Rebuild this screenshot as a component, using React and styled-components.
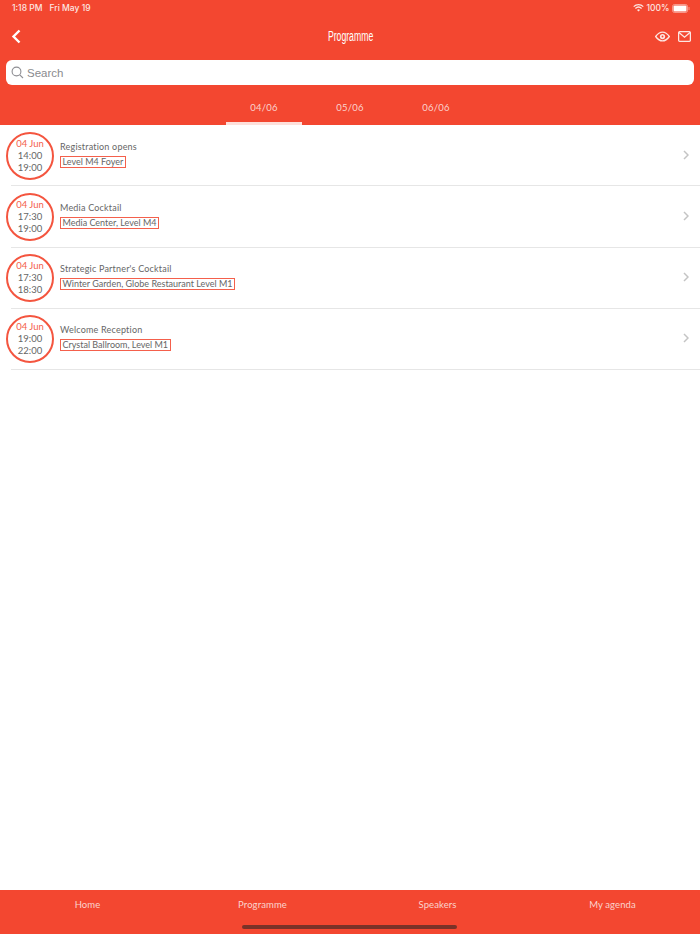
import React from "react";
import styled, { createGlobalStyle } from "styled-components";

const RED = "#f34730";
const BODY = `"Lato", "Liberation Sans", sans-serif`;

const events = [
  { from: "14:00", to: "19:00", title: "Registration opens", place: "Level M4 Foyer" },
  { from: "17:30", to: "19:00", title: "Media Cocktail", place: "Media Center, Level M4" },
  { from: "17:30", to: "18:30", title: "Strategic Partner's Cocktail", place: "Winter Garden, Globe Restaurant Level M1" },
  { from: "19:00", to: "22:00", title: "Welcome Reception", place: "Crystal Ballroom, Level M1" },
];

const GlobalStyle = createGlobalStyle`
  html, body { margin: 0; padding: 0; background: #fff; }
  body { font-family: ${BODY}; }
  * { box-sizing: border-box; }
`;

const Page = styled.div`
  width: 700px;
  height: 934px;
  display: flex;
  flex-direction: column;
  overflow: hidden;
`;

const Header = styled.header`
  height: 125px;
  background: ${RED};
  color: #fff;
  display: flex;
  flex-direction: column;
`;

const StatusBar = styled.div`
  height: 16px;
  padding: 0 10px 0 12px;
  display: flex;
  align-items: center;
  justify-content: space-between;
  font-family: "Inter", sans-serif;
  font-size: 8.5px;
  font-weight: 500;
  color: #fde6e2;
`;

const StatusLeft = styled.div`
  display: flex;
  gap: 7px;
`;

const StatusRight = styled.div`
  display: flex;
  align-items: center;
  gap: 2.5px;
`;

const NavBar = styled.div`
  height: 40px;
  padding: 0 9px 0 11px;
  display: grid;
  grid-template-columns: 1fr auto 1fr;
  align-items: center;
`;

const NavTitle = styled.div`
  font-family: "Liberation Sans", sans-serif;
  font-size: 14px;
  color: #fff;
  transform: scaleX(0.62);
`;

const NavIcons = styled.div`
  display: flex;
  align-items: center;
  justify-content: flex-end;
  gap: 8px;
`;

const SearchBox = styled.div`
  height: 25px;
  margin: 4px 6px 0;
  padding: 0 0 0 5px;
  background: #fff;
  border-radius: 6px;
  display: flex;
  align-items: center;
  gap: 3px;
  font-family: "Liberation Sans", sans-serif;
  font-size: 11.5px;
  color: #8a8a8e;
`;

const Tabs = styled.div`
  margin-top: auto;
  height: 40px;
  display: flex;
  justify-content: center;
  gap: 10px;
`;

const Tab = styled.div`
  width: 76px;
  padding-top: 8px;
  display: flex;
  align-items: center;
  justify-content: center;
  font-size: 9.5px;
  letter-spacing: 0.2px;
  color: #fbd3cd;
  border-bottom: 3px solid ${(p) => (p.$active ? "#fde0db" : "transparent")};
`;

const List = styled.main`
  flex: 1;
`;

const Row = styled.div`
  height: 61.25px;
  position: relative;
  padding: 0 11px 0 6px;
  display: flex;
  align-items: center;
  gap: 6px;
  &::after {
    content: "";
    position: absolute;
    left: 11px;
    right: 0;
    bottom: 0;
    height: 1px;
    background: #e6e6e6;
  }
`;

const Circle = styled.div`
  width: 48px;
  height: 48px;
  flex: none;
  border: 2px solid #f4553f;
  border-radius: 50%;
  display: flex;
  flex-direction: column;
  align-items: center;
  justify-content: center;
  font-size: 9.5px;
  line-height: 12px;
  color: #666;
`;

const CircleDate = styled.div`
  color: #f4604c;
`;

const Info = styled.div`
  flex: 1;
  padding-bottom: 3px;
  display: flex;
  flex-direction: column;
  align-items: flex-start;
  gap: 3px;
`;

const Title = styled.div`
  font-size: 9px;
  line-height: 12px;
  letter-spacing: 0.2px;
  color: #666;
`;

const Place = styled.div`
  height: 12px;
  padding: 0 1.5px;
  border: 1px solid #f4604c;
  font-size: 9px;
  line-height: 10px;
  color: #666;
  white-space: nowrap;
`;

const Chevron = styled.svg`
  margin-bottom: 2px;
`;

const Footer = styled.footer`
  height: 44px;
  background: ${RED};
  position: relative;
  display: grid;
  grid-template-columns: repeat(4, 175px);
  padding-top: 8px;
`;

const FootItem = styled.div`
  text-align: center;
  font-size: 9.5px;
  line-height: 13px;
  letter-spacing: 0.1px;
  color: #fbd3cd;
`;

const HomeBar = styled.div`
  position: absolute;
  left: 242px;
  bottom: 5px;
  width: 215px;
  height: 4px;
  border-radius: 2px;
  background: #7a3228;
`;

export default function App() {
  return (
    <Page>
      <GlobalStyle />
      <Header>
        <StatusBar>
          <StatusLeft>
            <span>1:18 PM</span>
            <span>Fri May 19</span>
          </StatusLeft>
          <StatusRight>
            <svg width="11" height="8" viewBox="0 0 11 8" fill="none" stroke="#fde6e2" strokeWidth="1.3">
              <path d="M.7 2.6a7 7 0 0 1 9.6 0" />
              <path d="M2.4 4.4a4.6 4.6 0 0 1 6.2 0" />
              <path d="M5.5 7.6 4 6a2.2 2.2 0 0 1 3 0z" fill="#fde6e2" stroke="none" />
            </svg>
            <span>100%</span>
            <svg width="18" height="9" viewBox="0 0 18 9">
              <rect x=".5" y=".5" width="15" height="8" rx="2" fill="none" stroke="#fde6e2" strokeOpacity=".5" />
              <rect x="1.5" y="1.5" width="13" height="6" rx="1" fill="#fff" />
              <rect x="16.5" y="3" width="1" height="3" fill="#fde6e2" fillOpacity=".5" />
            </svg>
          </StatusRight>
        </StatusBar>
        <NavBar>
          <svg width="10" height="15" viewBox="0 0 10 15" fill="none" stroke="#fff" strokeWidth="2.4">
            <path d="M8.5 1.5 2.5 7.5l6 6" />
          </svg>
          <NavTitle>Programme</NavTitle>
          <NavIcons>
            <svg width="15" height="11" viewBox="0 0 16 11" fill="none" stroke="#fde6e2" strokeWidth="1.4">
              <path d="M.7 5.5C3 2.2 5.4.8 8 .8s5 1.4 7.3 4.7C13 8.8 10.6 10.2 8 10.2S3 8.8.7 5.5z" />
              <circle cx="8" cy="5.5" r="2.8" fill="#fde6e2" stroke="none" />
              <circle cx="8" cy="5.5" r="1" fill={RED} stroke="none" />
            </svg>
            <svg width="13" height="11" viewBox="0 0 13 11" fill="none" stroke="#fde6e2" strokeWidth="1.3">
              <rect x=".6" y=".6" width="11.8" height="9.8" rx="1.5" />
              <path d="M1 1.5 6.5 6.2 12 1.5" />
            </svg>
          </NavIcons>
        </NavBar>
        <SearchBox>
          <svg width="13" height="13" viewBox="0 0 13 13" fill="none" stroke="#8e8e93" strokeWidth="1.1">
            <circle cx="5.5" cy="5.5" r="4.4" />
            <path d="M8.8 8.8 12 12" />
          </svg>
          Search
        </SearchBox>
        <Tabs>
          <Tab $active>04/06</Tab>
          <Tab>05/06</Tab>
          <Tab>06/06</Tab>
        </Tabs>
      </Header>
      <List>
        {events.map((e) => (
          <Row key={e.title}>
            <Circle>
              <CircleDate>04 Jun</CircleDate>
              <div>{e.from}</div>
              <div>{e.to}</div>
            </Circle>
            <Info>
              <Title>{e.title}</Title>
              <Place>{e.place}</Place>
            </Info>
            <Chevron width="6" height="10" viewBox="0 0 6 10" fill="none" stroke="#c4c4c4" strokeWidth="1.5">
              <path d="M1 1l4 4-4 4" />
            </Chevron>
          </Row>
        ))}
      </List>
      <Footer>
        <FootItem>Home</FootItem>
        <FootItem>Programme</FootItem>
        <FootItem>Speakers</FootItem>
        <FootItem>My agenda</FootItem>
        <HomeBar />
      </Footer>
    </Page>
  );
}
